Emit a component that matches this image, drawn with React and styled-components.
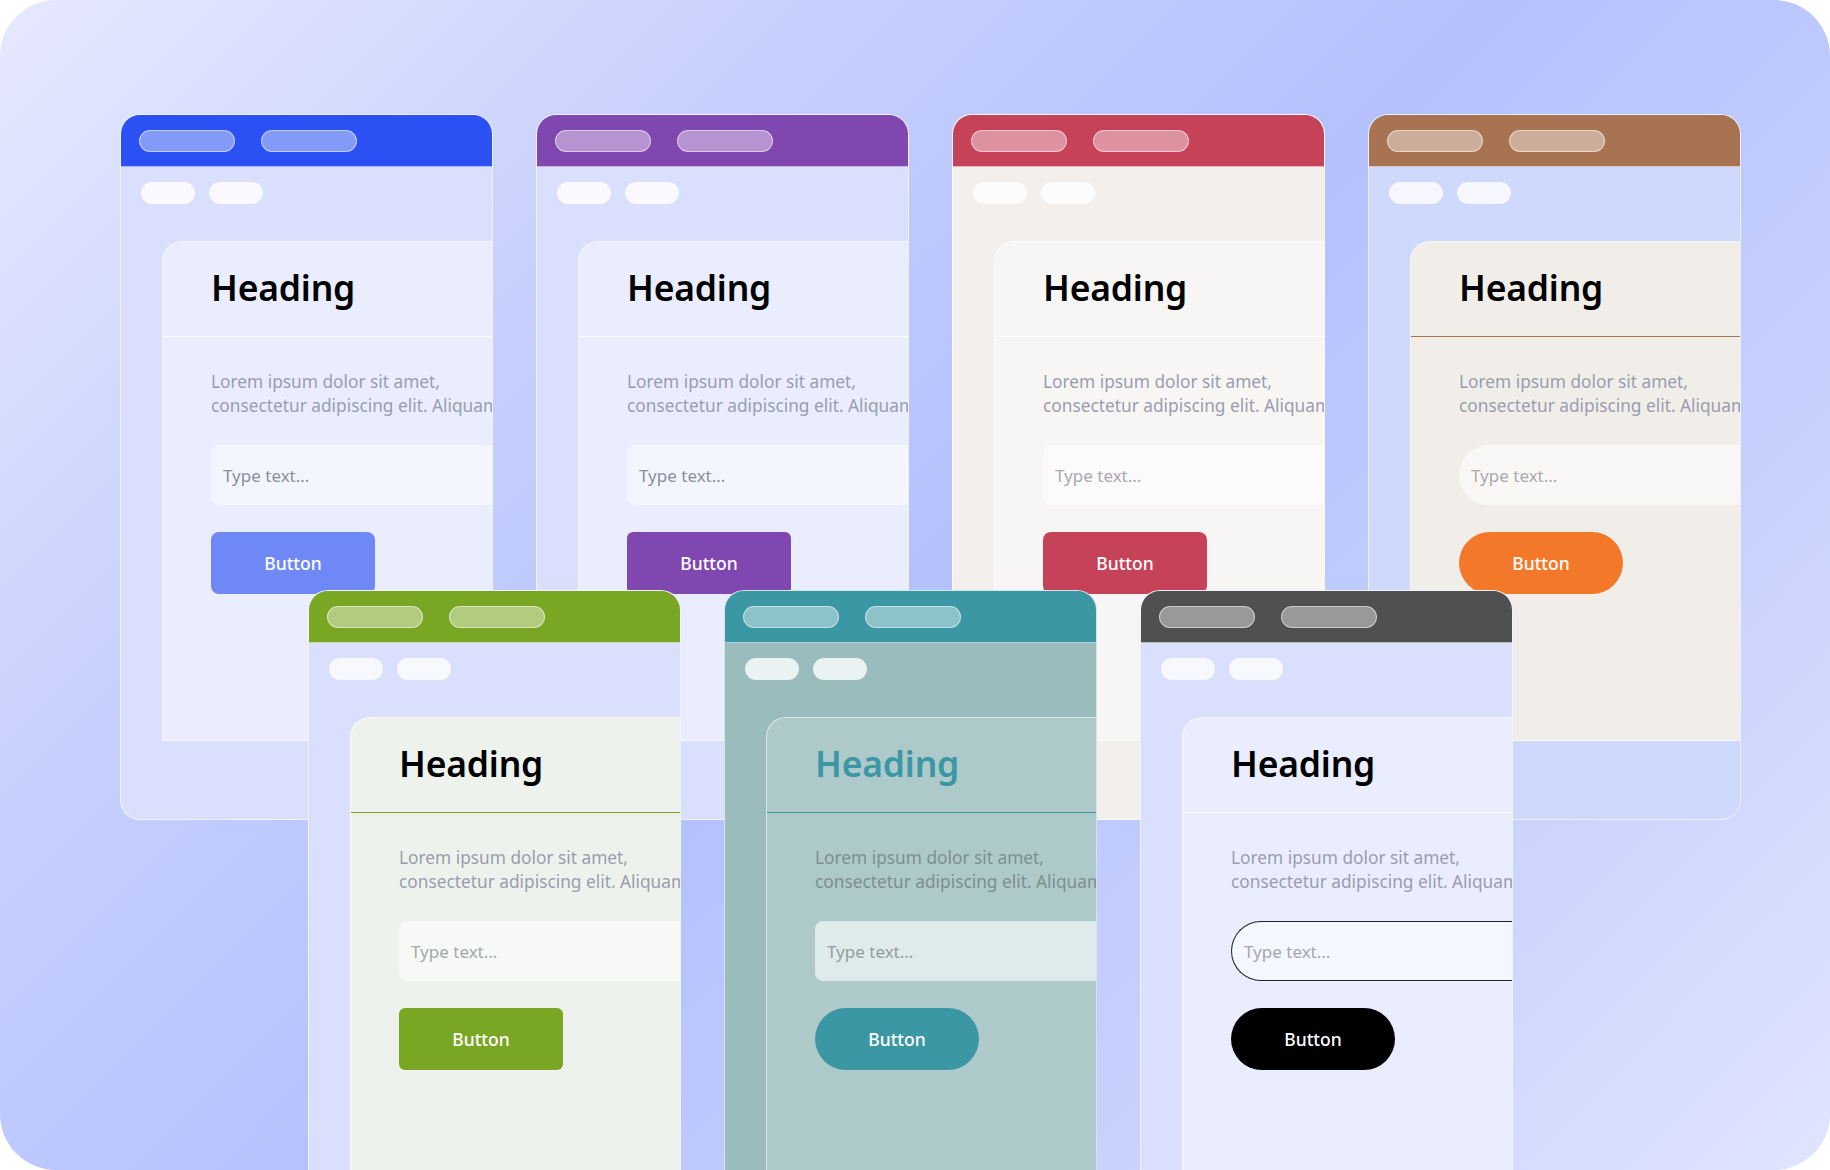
import React from 'react';
import styled, { createGlobalStyle } from 'styled-components';

const GlobalStyle = createGlobalStyle`
    html, body {
        margin: 0;
        padding: 0;
        background: #ffffff;
    }
    body {
        font-family: "Noto Sans", "Open Sans", sans-serif;
    }
`;

const themes = [
    {
        bar: '#2b51f5', body: '#dadffd', card: '#e9edfe', divider: 'rgba(255,255,255,0.85)',
        input: '#f4f6ff', button: '#6e88f6', buttonRadius: '8px',
    },
    {
        bar: '#8047b0', body: '#dadffd', card: '#e9edfe', divider: 'rgba(255,255,255,0.85)',
        input: '#f4f6ff', button: '#8047b0', buttonRadius: '6px',
    },
    {
        bar: '#c64259', body: '#f2efed', card: '#f7f6f4', divider: 'rgba(255,255,255,0.9)',
        input: '#fcfbfb', button: '#c64259', buttonRadius: '8px', placeholder: '#a9a9ae',
    },
    {
        bar: '#a87350', body: '#cfd8fd', card: '#f1eeea', divider: '#a87350',
        input: '#f9f8f6', inputRadius: '30px', button: '#f3782a', buttonRadius: '32px',
        placeholder: '#a9a9ae',
    },
    {
        bar: '#79a724', body: '#d9dffd', card: '#edf3ec', divider: '#79a724',
        input: '#f7f9f6', button: '#79a724', buttonRadius: '6px', placeholder: '#a4a8ad',
    },
    {
        bar: '#3c97a5', body: '#9bbcbd', card: '#aec9ca', divider: '#3c97a5', heading: '#3c97a5',
        text: '#7d8e90', tool: 'rgba(255,255,255,0.8)', input: '#dfeaea', placeholder: '#8f9e9f',
        button: '#3c97a5', buttonRadius: '32px',
    },
    {
        bar: '#505050', body: '#d9dffd', card: '#e9edfe', divider: 'rgba(255,255,255,0.85)',
        input: '#f5f7fe', inputBorder: '#222222', inputRadius: '30px', button: '#000000',
        buttonRadius: '32px', placeholder: '#a4a7b2',
    },
];

const Canvas = styled.div`
    width: 1830px;
    height: 1170px;
    border-radius: 56px;
    overflow: hidden;
    box-sizing: border-box;
    padding-top: 114px;
    background: linear-gradient(135deg, #e6e9fe 0%, #c6cffd 28%, #b4c1fd 50%, #c8d1fd 75%, #dfe4fe 100%);
`;

const Row = styled.div`
    display: flex;
    gap: 43px;
    padding-left: ${(p) => p.$indent}px;
    margin-top: ${(p) => p.$overlap || 0}px;
`;

const Window = styled.div`
    position: relative;
    flex: 0 0 373px;
    height: 706px;
    box-sizing: border-box;
    border: 1.5px solid rgba(255, 255, 255, 0.6);
    border-radius: 20px;
    background: ${(p) => p.$t.body};
    overflow: hidden;
    display: flex;
    flex-direction: column;
`;

const TitleBar = styled.div`
    flex: 0 0 auto;
    height: 52px;
    box-sizing: border-box;
    background: ${(p) => p.$t.bar};
    border-bottom: 1.5px solid rgba(255, 255, 255, 0.6);
    display: flex;
    align-items: center;
    gap: 26px;
    padding-left: 18px;
`;

const BarPill = styled.span`
    width: 96px;
    height: 22px;
    box-sizing: border-box;
    border-radius: 12px;
    background: rgba(255, 255, 255, 0.42);
    border: 1.5px solid rgba(255, 255, 255, 0.5);
`;

const Toolbar = styled.div`
    display: flex;
    gap: 14px;
    padding: 15px 0 0 20px;
`;

const ToolPill = styled.span`
    width: 54px;
    height: 22px;
    border-radius: 12px;
    background: ${(p) => p.$t.tool || 'rgba(255,255,255,0.82)'};
`;

const Card = styled.div`
    margin: 37px 0 0 41px;
    width: 420px;
    height: 500px;
    flex: 0 0 auto;
    box-sizing: border-box;
    background: ${(p) => p.$t.card};
    border: 1.5px solid rgba(255, 255, 255, 0.55);
    border-radius: 20px 0 0 0;
`;

const CardHeader = styled.div`
    height: 95px;
    box-sizing: border-box;
    padding: 0 0 5px 48px;
    display: flex;
    align-items: center;
    border-bottom: 1.5px solid ${(p) => p.$t.divider};
`;

const Heading = styled.h2`
    margin: 0;
    font-family: "Noto Sans", sans-serif;
    font-size: 35.5px;
    font-weight: 600;
    letter-spacing: -0.2px;
    color: ${(p) => p.$t.heading || '#000000'};
`;

const CardBody = styled.div`
    padding: 33px 0 0 48px;
`;

const Lorem = styled.p`
    margin: 0;
    width: 360px;
    font-size: 17.3px;
    line-height: 24px;
    color: ${(p) => p.$t.text || '#9a9dae'};
    white-space: nowrap;
`;

const Input = styled.div`
    margin-top: 27px;
    height: 60px;
    box-sizing: border-box;
    display: flex;
    align-items: center;
    padding-left: 12px;
    background: ${(p) => p.$t.input};
    border: ${(p) => (p.$t.inputBorder ? `1.5px solid ${p.$t.inputBorder}` : 'none')};
    border-right: none;
    border-radius: ${(p) => p.$t.inputRadius || '8px'} 0 0 ${(p) => p.$t.inputRadius || '8px'};
    font-size: 17px;
    color: ${(p) => p.$t.placeholder || '#8a8e9c'};
`;

const Button = styled.div`
    margin-top: 27px;
    width: 164px;
    height: 62px;
    display: flex;
    align-items: center;
    justify-content: center;
    background: ${(p) => p.$t.button};
    border-radius: ${(p) => p.$t.buttonRadius};
    color: #ffffff;
    font-size: 17.5px;
    font-weight: 500;
`;

const BrowserWindow = ({ t }) => (
    <Window $t={t}>
        <TitleBar $t={t}>
            <BarPill />
            <BarPill />
        </TitleBar>
        <Toolbar>
            <ToolPill $t={t} />
            <ToolPill $t={t} />
        </Toolbar>
        <Card $t={t}>
            <CardHeader $t={t}>
                <Heading $t={t}>Heading</Heading>
            </CardHeader>
            <CardBody>
                <Lorem $t={t}>
                    Lorem ipsum dolor sit amet,
                    <br />
                    consectetur adipiscing elit. Aliquam
                </Lorem>
                <Input $t={t}>Type text...</Input>
                <Button $t={t}>Button</Button>
            </CardBody>
        </Card>
    </Window>
);

export default function App() {
    return (
        <>
            <GlobalStyle />
            <Canvas>
                <Row $indent={120}>
                    {themes.slice(0, 4).map((t, i) => (
                        <BrowserWindow key={i} t={t} />
                    ))}
                </Row>
                <Row $indent={308} $overlap={-230}>
                    {themes.slice(4).map((t, i) => (
                        <BrowserWindow key={i} t={t} />
                    ))}
                </Row>
            </Canvas>
        </>
    );
}
